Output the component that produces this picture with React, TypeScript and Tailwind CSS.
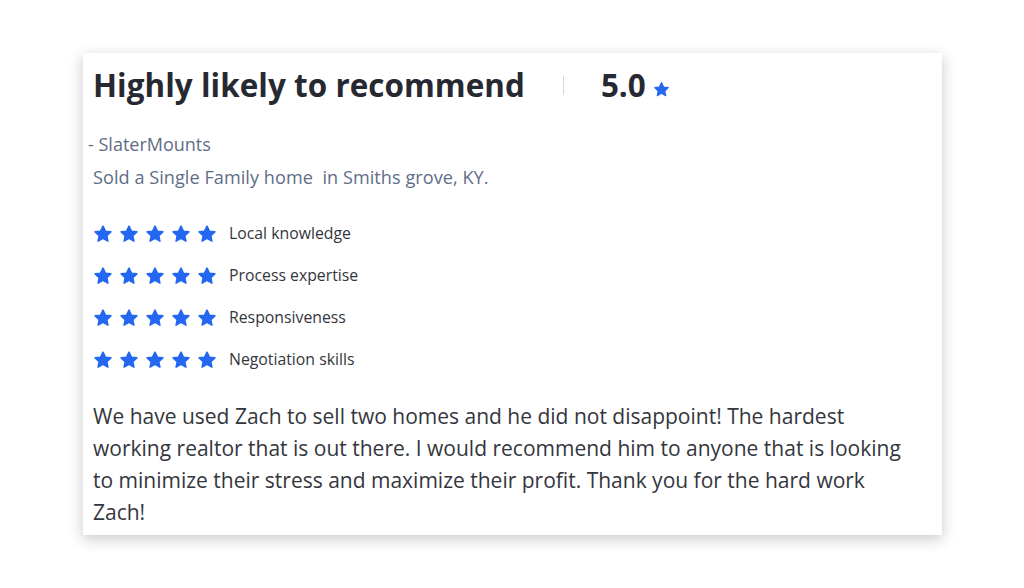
const STAR = "M12 2.5l2.9 6.1 6.6.8-4.9 4.6 1.3 6.6L12 17.3l-5.9 3.3 1.3-6.6-4.9-4.6 6.6-.8z";

function Star({ size = 20 }: { size?: number }) {
  return (
    <svg width={size} height={size} viewBox="0 0 24 24" className="shrink-0">
      <path d={STAR} fill="#2467f0" stroke="#2467f0" strokeWidth="1.8" strokeLinejoin="round" />
    </svg>
  );
}

const categories = ["Local knowledge", "Process expertise", "Responsiveness", "Negotiation skills"];

export default function App() {
  return (
    <div className="w-[1024px] h-[588px] bg-white pt-[53px] pl-[83px] font-['Open_Sans',sans-serif]">
      <div className="w-[859px] h-[482px] bg-white shadow-[0_4px_14px_rgba(0,0,0,0.22)] pl-[10px] pt-[12px]">
        <div className="flex items-center h-[40px]">
          <h1 className="text-[31.4px] font-bold text-[#272932] tracking-[0.05px]">Highly likely to recommend</h1>
          <div className="ml-[38px] w-px h-[19px] bg-[#d8d8dc]" />
          <span className="ml-[37px] text-[31.4px] font-bold text-[#272932]">5.0</span>
          <span className="ml-[7px] mt-[8px]">
            <Star size={17} />
          </span>
        </div>
        <div className="mt-[27px] -ml-[5px] text-[18px] text-[#5f6d87] leading-[24px]">- SlaterMounts</div>
        <div className="mt-[9px] text-[18.1px] text-[#5f6d87] leading-[24px] tracking-[0.05px]">Sold a Single Family home&nbsp; in Smiths grove, KY.</div>
        <div className="mt-[34px] flex flex-col gap-[21px]">
          {categories.map((c) => (
            <div key={c} className="flex items-center h-[21px]">
              <div className="flex gap-[6px]">
                {[0, 1, 2, 3, 4].map((i) => (
                  <Star key={i} />
                ))}
              </div>
              <span className="ml-[12px] text-[15.8px] text-[#34363d]">{c}</span>
            </div>
          ))}
        </div>
        <p className="mt-[30px] w-[815px] text-[21px] leading-[32px] text-[#34363d]">
          We have used Zach to sell two homes and he did not disappoint! The hardest working realtor that is out there. I would recommend him to anyone that is looking to minimize their stress and maximize their profit. Thank you for the hard work Zach!
        </p>
      </div>
    </div>
  );
}
